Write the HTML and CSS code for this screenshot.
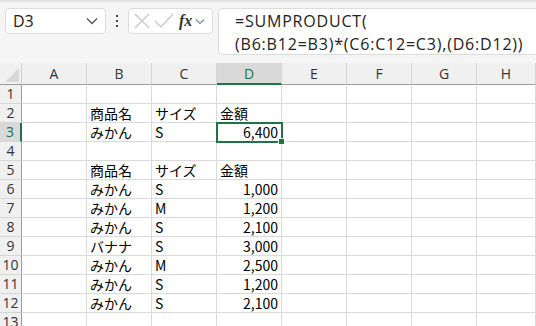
FILE: index.html
```html
<!DOCTYPE html>
<html lang="ja">
<head>
  <meta charset="UTF-8">
  <title>SUMPRODUCT</title>
  <link rel="stylesheet" href="styles.css">
</head>
<body>
  <div class="toolbar">
    <div class="namebox">
      <span>D3</span>
      <svg class="chev" width="12" height="8" viewBox="0 0 12 8"><path d="M1 1.5 L6 6.5 L11 1.5" fill="none" stroke="#555" stroke-width="1.3"/></svg>
    </div>
    <div class="dots"><i></i><i></i><i></i></div>
    <div class="fxbox">
      <svg width="18" height="18" viewBox="0 0 18 18"><path d="M2 2 L16 16 M16 2 L2 16" stroke="#c4c4c4" stroke-width="1.2" fill="none"/></svg>
      <svg width="20" height="18" viewBox="0 0 20 18"><path d="M1 9 L7 15 L19 2" stroke="#c4c4c4" stroke-width="1.2" fill="none"/></svg>
      <span class="fx">fx</span>
      <svg width="10" height="7" viewBox="0 0 10 7"><path d="M1 1.5 L5 5.5 L9 1.5" fill="none" stroke="#7a8ca8" stroke-width="1.2"/></svg>
    </div>
    <div class="formula">=SUMPRODUCT(<br>(B6:B12=B3)*(C6:C12=C3),(D6:D12))</div>
  </div>
  <div class="sheet">
    <div class="corner"><svg width="14" height="14" viewBox="0 0 14 14"><path d="M14 0 L14 14 L0 14 Z" fill="#d9d9d9"/></svg></div>
    <div class="ch">A</div><div class="ch">B</div><div class="ch">C</div><div class="ch active">D</div><div class="ch">E</div><div class="ch">F</div><div class="ch">G</div><div class="ch">H</div>

    <div class="rh">1</div><div class="c"></div><div class="c"></div><div class="c"></div><div class="c"></div><div class="c"></div><div class="c"></div><div class="c"></div><div class="c"></div>
    <div class="rh">2</div><div class="c"></div><div class="c">商品名</div><div class="c">サイズ</div><div class="c">金額</div><div class="c"></div><div class="c"></div><div class="c"></div><div class="c"></div>
    <div class="rh sel">3</div><div class="c"></div><div class="c">みかん</div><div class="c">S</div><div class="c num cur">6,400<span class="handle"></span></div><div class="c"></div><div class="c"></div><div class="c"></div><div class="c"></div>
    <div class="rh">4</div><div class="c"></div><div class="c"></div><div class="c"></div><div class="c"></div><div class="c"></div><div class="c"></div><div class="c"></div><div class="c"></div>
    <div class="rh">5</div><div class="c"></div><div class="c">商品名</div><div class="c">サイズ</div><div class="c">金額</div><div class="c"></div><div class="c"></div><div class="c"></div><div class="c"></div>
    <div class="rh">6</div><div class="c"></div><div class="c">みかん</div><div class="c">S</div><div class="c num">1,000</div><div class="c"></div><div class="c"></div><div class="c"></div><div class="c"></div>
    <div class="rh">7</div><div class="c"></div><div class="c">みかん</div><div class="c">M</div><div class="c num">1,200</div><div class="c"></div><div class="c"></div><div class="c"></div><div class="c"></div>
    <div class="rh">8</div><div class="c"></div><div class="c">みかん</div><div class="c">S</div><div class="c num">2,100</div><div class="c"></div><div class="c"></div><div class="c"></div><div class="c"></div>
    <div class="rh">9</div><div class="c"></div><div class="c">バナナ</div><div class="c">S</div><div class="c num">3,000</div><div class="c"></div><div class="c"></div><div class="c"></div><div class="c"></div>
    <div class="rh">10</div><div class="c"></div><div class="c">みかん</div><div class="c">M</div><div class="c num">2,500</div><div class="c"></div><div class="c"></div><div class="c"></div><div class="c"></div>
    <div class="rh">11</div><div class="c"></div><div class="c">みかん</div><div class="c">S</div><div class="c num">1,200</div><div class="c"></div><div class="c"></div><div class="c"></div><div class="c"></div>
    <div class="rh">12</div><div class="c"></div><div class="c">みかん</div><div class="c">S</div><div class="c num">2,100</div><div class="c"></div><div class="c"></div><div class="c"></div><div class="c"></div>
    <div class="rh">13</div><div class="c"></div><div class="c"></div><div class="c"></div><div class="c"></div><div class="c"></div><div class="c"></div><div class="c"></div><div class="c"></div>
  </div>
</body>
</html>
```
FILE: styles.css
```css
body {
  margin: 0;
  width: 536px;
  height: 326px;
  overflow: hidden;
  background: #fff;
  font-family: "Noto Sans CJK JP", "Noto Sans", sans-serif;
}
.toolbar {
  background: #f5f5f5;
  border-top: 2px solid #e3e3e3;
  display: flex;
  align-items: flex-start;
  padding-top: 6px;
  box-sizing: border-box;
  height: 63px;
}
.namebox {
  margin-left: 5px;
  width: 101px;
  height: 26px;
  box-sizing: border-box;
  background: #fff;
  border: 1px solid #dcdcdc;
  border-radius: 4px;
  display: flex;
  align-items: center;
  justify-content: space-between;
  padding: 0 7px 0 7px;
  font-family: "Open Sans", "Noto Sans", sans-serif;
  font-size: 16px;
  color: #222;
}
.dots {
  width: 22px;
  display: flex;
  flex-direction: column;
  align-items: center;
  gap: 3px;
  padding-top: 7px;
}
.dots i {
  width: 2px;
  height: 2px;
  background: #444;
}
.fxbox {
  width: 85px;
  height: 26px;
  box-sizing: border-box;
  background: #fff;
  border: 1px solid #dcdcdc;
  border-radius: 4px;
  display: flex;
  align-items: center;
  gap: 3px;
  padding-left: 4px;
}
.fx {
  font-family: "Liberation Serif", serif;
  font-style: italic;
  font-weight: bold;
  font-size: 16px;
  color: #333;
  margin-left: 2px;
}
.formula {
  margin-left: 5px;
  flex: 1;
  height: 47px;
  box-sizing: border-box;
  background: #fff;
  border: 1px solid #dcdcdc;
  border-right: none;
  border-radius: 5px 0 0 5px;
  padding: 1px 0 0 16px;
  font-family: "Open Sans", "Noto Sans", sans-serif;
  font-size: 16px;
  letter-spacing: 0.8px;
  line-height: 23px;
  color: #222;
  white-space: nowrap;
}
.sheet {
  display: grid;
  grid-template-columns: 22px repeat(7, 65px) 1fr;
  grid-template-rows: 22px repeat(13, 19px);
  font-size: 14px;
  color: #000;
}
.corner {
  background: #f0f0f0;
  border-right: 1px solid #cfcfcf;
  border-bottom: 1px solid #9e9e9e;
  display: flex;
  align-items: flex-end;
  justify-content: flex-end;
  padding: 0 2px 2px 0;
}
.ch {
  background: #f0f0f0;
  border-right: 1px solid #d6d6d6;
  border-bottom: 1px solid #9e9e9e;
  text-align: center;
  font-family: "Open Sans", "Noto Sans", sans-serif;
  font-size: 14px;
  line-height: 22px;
  color: #333;
}
.ch.active {
  background: #d9d9d9;
  border-bottom: 2px solid #217346;
  color: #217346;
}
.rh {
  background: #f0f0f0;
  border-right: 1px solid #9e9e9e;
  border-bottom: 1px solid #d6d6d6;
  text-align: center;
  font-family: "Open Sans", "Noto Sans", sans-serif;
  font-size: 14px;
  line-height: 18px;
  color: #333;
}
.rh.sel {
  background: #d9d9d9;
  border-right: 2px solid #217346;
  color: #217346;
}
.c {
  border-right: 1px solid #dadada;
  border-bottom: 1px solid #dadada;
  padding: 0 3px;
  line-height: 18px;
  white-space: nowrap;
  position: relative;
}
.num {
  text-align: right;
}
.cur {
  outline: 2px solid #217346;
  outline-offset: -1px;
  z-index: 1;
}
.handle {
  position: absolute;
  right: -4px;
  bottom: -4px;
  width: 5px;
  height: 5px;
  background: #217346;
  border: 1px solid #fff;
}
```
